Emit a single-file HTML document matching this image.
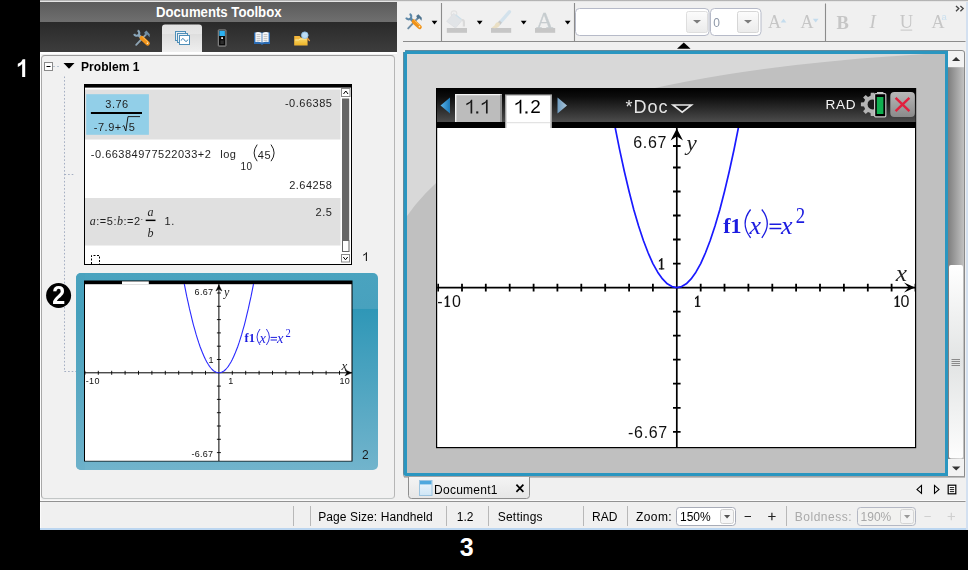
<!DOCTYPE html>
<html>
<head>
<meta charset="utf-8">
<title>TI-Nspire Documents Toolbox</title>
<style>
*{box-sizing:border-box;margin:0;padding:0}
html,body{width:968px;height:570px;overflow:hidden;background:#000}
body{position:relative;font-family:"Liberation Sans",sans-serif;font-size:12px;color:#000}
.abs{position:absolute}
#app{position:absolute;left:40px;top:0;width:928px;height:530px;background:#f0f0f0}
/* callout numbers */
.callout{position:absolute;color:#fff;font-weight:bold;font-size:25px;line-height:25px}
/* toolbox */
#tb-title{position:absolute;left:0;top:2px;width:357px;height:20px;background:linear-gradient(#5b5b5b,#6f6f6f);color:#fff;font-weight:bold;font-size:14px;line-height:21.5px;text-align:center;overflow:hidden}
#tb-icons{position:absolute;left:0;top:22px;width:357px;height:30px;background:linear-gradient(#2a2a2a,#3d3d3d)}
#tb-panel{position:absolute;left:1px;top:54.5px;width:354px;height:444.5px;border:1px solid #9a9a9a;border-color:#9c9c9c #b6b6b6 #c2c6c6 #a8a8a8;border-radius:4px;background:#f1f1f1}
/* document frame */
#docframe{position:absolute;left:363px;top:50px;width:545px;height:426px;border:3px solid #2a96c0;border-width:4px 3px 3px 4px;border-radius:3px 0 0 3px;background:#c0c0c0;overflow:hidden}
</style>
</head>
<body>
<div class="callout" style="left:459.8px;top:535px">3</div>

<div id="app">
  <div class="abs" style="left:0;top:0;width:928px;height:2px;background:linear-gradient(#9a9a9a,#ffffff)"></div>
  <!-- toolbox -->
  <div id="tb-title"><span style="display:inline-block;transform:scaleX(0.94);transform-origin:50% 50%">Documents Toolbox</span></div>
  <div id="tb-icons"></div>
  <div class="abs" style="left:0;top:52px;width:357px;height:2px;background:#fff"></div>
  <div id="tb-panel"></div>

  <!-- document frame -->
  <div id="docframe"></div>
  

  <!-- status bar -->
  <div class="abs" style="left:0;top:528px;width:928px;height:2px;background:#bcd6f0"></div><div class="abs" style="left:0;top:52px;width:1px;height:476px;background:#fcfcfc"></div>
  <div class="abs" style="left:926px;top:2px;width:2px;height:528px;background:#d3e0f0"></div>
</div>

<!-- MAIN GRAPH (page coordinates) -->
<svg class="abs" style="left:0;top:0;will-change:transform" width="968" height="570" viewBox="0 0 968 570" font-family="Liberation Sans, sans-serif">
  <defs>
    <linearGradient id="hdr" x1="0" y1="0" x2="0" y2="1"><stop offset="0" stop-color="#000"/><stop offset="0.25" stop-color="#0c0c0c"/><stop offset="1" stop-color="#4c4c4c"/></linearGradient>
    <linearGradient id="larr" x1="0" y1="0" x2="1" y2="0"><stop offset="0" stop-color="#5bb4ea"/><stop offset="1" stop-color="#1b78b8"/></linearGradient>
    <linearGradient id="rarr" x1="0" y1="0" x2="1" y2="0"><stop offset="0" stop-color="#6f9cc0"/><stop offset="1" stop-color="#a9c4d8"/></linearGradient>
    <linearGradient id="xbtn" x1="0" y1="0" x2="0" y2="1"><stop offset="0" stop-color="#b8b8b8"/><stop offset="1" stop-color="#8a8a8a"/></linearGradient>
    <clipPath id="gclip"><rect x="437.2" y="128" width="477.8" height="319"/></clipPath>
    <clipPath id="gearclip"><rect x="858" y="90" width="17" height="30"/></clipPath>
  </defs>
  <!-- swoosh -->
  <path d="M407,216 Q500,79 925,54 L407,54 Z" fill="#d8d8d8"/>
  <!-- handheld screen -->
  <rect x="436" y="88" width="480.2" height="360.2" fill="#000"/>
  <rect x="437" y="88" width="478.6" height="34" fill="url(#hdr)"/>
  <rect x="437.2" y="128" width="477.8" height="319" fill="#fff"/>
  <!-- tabs -->
  <polygon points="440.5,105.5 450,97.5 450,113.5" fill="url(#larr)"/>
  <rect x="455" y="94" width="47" height="28" fill="#bcbcbc"/>
  <path d="M455.7,122 V94.6 H500.4" fill="none" stroke="#f4f4f4" stroke-width="1.4"/>
  <path d="M501,95 V122" fill="none" stroke="#8a8a8a" stroke-width="1.6"/>
  <polygon points="472.23,99.87 471.10,99.87 469.83,101.78 466.33,103.57 466.33,105.24 468.79,104.10 470.57,102.59 470.57,113.40 472.23,113.40" fill="#1a1a1a"/>
  <rect x="476.2" y="111.4" width="2.1" height="2.1" fill="#1a1a1a"/>
  <polygon points="487.63,99.87 486.50,99.87 485.23,101.78 481.73,103.57 481.73,105.24 484.19,104.10 485.97,102.59 485.97,113.40 487.63,113.40" fill="#1a1a1a"/>
  <rect x="505" y="94.4" width="47" height="33.6" fill="#a4a4a4"/>
  <rect x="506.4" y="95.6" width="44" height="32.4" fill="#fff"/>
  <rect x="506.4" y="122.2" width="44" height="1" fill="#dcdcdc"/>
  <polygon points="521.33,99.87 520.20,99.87 518.93,101.78 515.43,103.57 515.43,105.24 517.89,104.10 519.67,102.59 519.67,113.40 521.33,113.40" fill="#000"/>
  <rect x="525.4" y="111.4" width="2.1" height="2.1" fill="#000"/>
  <text x="530.2" y="113.4" font-size="18.9" fill="#000">2</text>
  <polygon points="557.5,97.5 567,105.5 557.5,113.5" fill="url(#rarr)"/>
  <text x="625.5" y="112.5" font-size="18" fill="#e4e4e4" letter-spacing="1">*Doc</text>
  <polygon points="673,105 691.5,105 682.2,112.2" fill="#1a1a1a" stroke="#e8e8e8" stroke-width="1.6" stroke-linejoin="miter"/>
  <text x="825.4" y="109" font-size="13.6" fill="#f4f4f4" letter-spacing="0.8">RAD</text>
  <g clip-path="url(#gearclip)"><path d="M881.2,102.3 L884.3,102.6 L884.3,106.2 L881.2,106.5 L880.1,109.0 L882.1,111.3 L879.5,113.9 L877.2,111.9 L874.7,113.0 L874.4,116.1 L870.8,116.1 L870.5,113.0 L868.0,111.9 L865.7,113.9 L863.1,111.3 L865.1,109.0 L864.0,106.5 L860.9,106.2 L860.9,102.6 L864.0,102.3 L865.1,99.8 L863.1,97.5 L865.7,94.9 L868.0,96.9 L870.5,95.8 L870.8,92.7 L874.4,92.7 L874.7,95.8 L877.2,96.9 L879.5,94.9 L882.1,97.5 L880.1,99.8 Z" fill="#b4b4b4"/><circle cx="872.6" cy="104.4" r="5.0" fill="#1c1c1c"/></g>
  <rect x="877" y="92" width="6.4" height="2" fill="#c8c8c8"/>
  <rect x="874.6" y="93.6" width="11.2" height="23.2" rx="1" fill="#000" stroke="#c8c8c8" stroke-width="1.2"/>
  <rect x="876.8" y="97" width="6.6" height="17" fill="#10b050"/>
  <!-- close button -->
  <rect x="890.3" y="92" width="24.6" height="25" rx="4" fill="url(#xbtn)"/>
  <path d="M895.6,97.8 L909.4,111.2 M909.4,97.8 L895.6,111.2" stroke="#e2203e" stroke-width="2.4" fill="none"/>
  <!-- graph -->
  <g clip-path="url(#gclip)">
    <path d="M676.8,128 V447 M437,287.6 H915" stroke="#000" stroke-width="1.7" fill="none"/>
    <path d="M438.1,283.8 v7.6 M462.0,283.8 v7.6 M485.8,283.8 v7.6 M509.7,283.8 v7.6 M533.6,283.8 v7.6 M557.4,283.8 v7.6 M581.3,283.8 v7.6 M605.2,283.8 v7.6 M629.1,283.8 v7.6 M652.9,283.8 v7.6 M700.7,283.8 v7.6 M724.5,283.8 v7.6 M748.4,283.8 v7.6 M772.3,283.8 v7.6 M796.1,283.8 v7.6 M820.0,283.8 v7.6 M843.9,283.8 v7.6 M867.8,283.8 v7.6 M891.6,283.8 v7.6 M915.5,283.8 v7.6 M673.0,431.8 h7.6 M673.0,407.8 h7.6 M673.0,383.7 h7.6 M673.0,359.7 h7.6 M673.0,335.7 h7.6 M673.0,311.6 h7.6 M673.0,263.6 h7.6 M673.0,239.5 h7.6 M673.0,215.5 h7.6 M673.0,191.5 h7.6 M673.0,167.5 h7.6 M673.0,146.0 h7.6" stroke="#000" stroke-width="1.8" fill="none"/>
    <path d="M670.5999999999999,140.6 L676.8,128.4 L683.0,140.6 L676.8,136.2 Z" fill="#000"/>
    <path d="M904,282.6 L915,287.6 L904,292.6 L908.6,287.6 Z" fill="#000"/>
    <path d="M610.0,99.2 L614.7,125.2 L619.5,149.2 L624.3,171.3 L629.1,191.5 L633.8,209.7 L638.6,226.1 L643.4,240.5 L648.2,253.0 L652.9,263.6 L657.7,272.2 L662.5,278.9 L667.3,283.8 L672.0,286.6 L676.8,287.6 L681.6,286.6 L686.3,283.8 L691.1,278.9 L695.9,272.2 L700.7,263.6 L705.4,253.0 L710.2,240.5 L715.0,226.1 L719.8,209.7 L724.5,191.5 L729.3,171.3 L734.1,149.2 L738.9,125.2 L743.6,99.2" stroke="#1a1aff" stroke-width="1.7" fill="none" stroke-linejoin="round"/>
    <g font-size="16" fill="#111" letter-spacing="0.7">
      <text x="633.2" y="148">6.67</text>
      <text x="628" y="437.8">-6.67</text>
      <text x="437.2" y="307">-</text>
      <text x="452" y="307">0</text>
      <text x="900.5" y="307">0</text>
    </g>
    <path d="M660.75,269.40 V260.50 L658.90,262.00 L658.90,260.60 L661.70,258.10 H662.45 V269.40 Z" fill="#111"/><rect x="658.90" y="268.30" width="5.4" height="1.1" fill="#111"/>
    <path d="M696.85,306.90 V298.00 L695.00,299.50 L695.00,298.10 L697.80,295.60 H698.55 V306.90 Z" fill="#111"/><rect x="695.00" y="305.80" width="5.4" height="1.1" fill="#111"/>
    <path d="M446.55,306.90 V298.00 L444.70,299.50 L444.70,298.10 L447.50,295.60 H448.25 V306.90 Z" fill="#111"/><rect x="444.70" y="305.80" width="5.4" height="1.1" fill="#111"/>
    <path d="M896.45,306.90 V298.00 L894.60,299.50 L894.60,298.10 L897.40,295.60 H898.15 V306.90 Z" fill="#111"/><rect x="894.60" y="305.80" width="5.4" height="1.1" fill="#111"/>
    <text x="0" y="0" font-size="21" font-family="Liberation Serif, serif" font-style="italic" fill="#222" transform="translate(686.4 149.6) scale(1.1 1)">y</text>
    <text x="0" y="0" font-size="23" font-family="Liberation Serif, serif" font-style="italic" fill="#222" transform="translate(895.8 281.4) scale(1.1 1)">x</text>
    <g fill="#1c1ce0" font-family="Liberation Serif, serif">
      <text x="723.3" y="233.4" font-size="22" font-weight="bold">f1</text>
      <path d="M750.6,209.5 Q739.6,223.5 750.6,237.8" fill="none" stroke="#1c1ce0" stroke-width="1.3"/>
      <text x="749.6" y="233.6" font-size="26" font-style="italic">x</text>
      <path d="M761.8,209.5 Q772.8,223.5 761.8,237.8" fill="none" stroke="#1c1ce0" stroke-width="1.3"/>
      <path d="M769.5,224.2 h11.8 M769.5,228.6 h11.8" fill="none" stroke="#1c1ce0" stroke-width="1.5"/>
      <text x="781" y="233.6" font-size="26" font-style="italic">x</text>
      <text x="0" y="0" font-size="22.5" transform="translate(795.8 223.3) scale(0.84 1)">2</text>
    </g>
  </g>
  <!-- callout 1 and 3 -->
  <polygon points="25.20,59.29 22.69,59.29 21.06,62.02 17.79,63.86 17.79,66.94 20.13,65.78 22.15,63.99 22.15,76.90 25.20,76.90" fill="#fff"/>
</svg>

<!-- LEFT PANEL (page coordinates) -->
<svg class="abs" style="left:0;top:0" width="968" height="570" viewBox="0 0 968 570" font-family="Liberation Sans, sans-serif">
  <defs>
    <linearGradient id="selg" x1="0" y1="0" x2="0" y2="1"><stop offset="0" stop-color="#4aa3bf"/><stop offset="0.18" stop-color="#48a1be"/><stop offset="0.185" stop-color="#2f97b7"/><stop offset="1" stop-color="#72b4cc"/></linearGradient>
    <linearGradient id="selg2" x1="0" y1="0" x2="0" y2="1"><stop offset="0" stop-color="#49a2be"/><stop offset="0.2" stop-color="#46a0bc"/><stop offset="1" stop-color="#6db1ca"/></linearGradient>
    <clipPath id="tclip"><rect x="85" y="284" width="267" height="177"/></clipPath>
    <clipPath id="selclip"><rect x="76" y="273" width="302" height="197" rx="5"/></clipPath>
  </defs>
  <!-- tree -->
  <path d="M64.5,76.5 V372 M64.5,174.5 H75 M64.5,371.5 H76" stroke="#a4aec2" stroke-width="1" stroke-dasharray="1.6 2" fill="none"/>
  <path d="M53,66.5 H61" stroke="#b8c4d0" stroke-width="1" stroke-dasharray="2 2"/>
  <rect x="44.5" y="62.5" width="8" height="8" fill="#fff" stroke="#8a8a8a" stroke-width="1"/>
  <path d="M46.5,66.5 H50.5" stroke="#000" stroke-width="1"/>
  <polygon points="63.5,63 74.5,63 69,68.8" fill="#000"/>
  <text x="81" y="70.8" font-size="12" font-weight="bold" fill="#000" letter-spacing="0.05">Problem 1</text>

  <!-- thumbnail 1 : calculator -->
  <rect x="84.5" y="85" width="267" height="179.5" fill="#fff" stroke="#000" stroke-width="1"/>
  <rect x="84" y="84" width="268" height="3.6" fill="#000"/>
  <rect x="85" y="89.5" width="255.5" height="50" fill="#e0e0e0"/>
  <rect x="85" y="198" width="255.5" height="47.5" fill="#e0e0e0"/>
  <rect x="86.2" y="94.2" width="62.7" height="40.6" fill="#92cfe8"/>
  <g fill="#1e1e1e" font-size="11" letter-spacing="0.5">
    <text x="105.3" y="108">3.76</text>
    <rect x="90.9" y="112" width="51.1" height="2" fill="#000"/>
    <text x="93.8" y="131">-7.9+</text>
    <path d="M122.6,126.4 l1.2,-0.8 l2,5.4 l2.2,-14.4 h12" fill="none" stroke="#1e1e1e" stroke-width="1"/>
    <text x="128.8" y="131">5</text>
    <text x="332.4" y="107.4" text-anchor="end">-0.66385</text>
    <text x="90.8" y="157.7">-0.66384977522033+2</text>
    <text x="220.3" y="157.7">log</text>
    <text x="240.5" y="170.4" font-size="10">10</text>
    <text x="257.8" y="158.5">45</text>
    <path d="M257.2,144.6 Q251,153 257.2,161.2 M271,144.6 Q277.2,153 271,161.2" fill="none" stroke="#1e1e1e" stroke-width="1"/>
    <text x="332.4" y="189.2" text-anchor="end">2.64258</text>
    <text x="332.4" y="216" text-anchor="end">2.5</text>
    <text x="89.8" y="224.8"><tspan font-style="italic" font-family="Liberation Serif, serif" font-size="12">a</tspan>:=5:<tspan font-style="italic" font-family="Liberation Serif, serif" font-size="12">b</tspan>:=2<tspan font-size="8" dy="-3">·</tspan></text>
    <text x="147.4" y="216.2" font-style="italic" font-family="Liberation Serif, serif" font-size="12">a</text>
    <rect x="145.7" y="219.6" width="9.8" height="1.5" fill="#000"/>
    <text x="147.6" y="236.6" font-style="italic" font-family="Liberation Serif, serif" font-size="12">b</text>
    <text x="164.6" y="224.8">1.</text>
  </g>
  <path d="M91.5,264 V255.5 H99.5 V264" fill="none" stroke="#000" stroke-width="1" stroke-dasharray="2 1.5"/>
  <!-- thumb scrollbar -->
  <rect x="341.5" y="88.5" width="8.5" height="8" fill="#fff" stroke="#8a8a8a" stroke-width="1"/>
  <path d="M343.5,94 L345.8,91 L348,94" fill="none" stroke="#000" stroke-width="1"/>
  <rect x="342" y="98.5" width="7.2" height="141.5" fill="#666"/>
  <rect x="342.5" y="240.5" width="6.5" height="11" fill="#fff" stroke="#666" stroke-width="1"/>
  <rect x="341.5" y="254.5" width="8" height="7.5" fill="#fff" stroke="#8a8a8a" stroke-width="1"/>
  <path d="M343.3,257 L345.5,259.8 L347.7,257" fill="none" stroke="#000" stroke-width="1"/>
  <polygon points="366.94,252.26 366.21,252.26 365.39,253.50 363.13,254.66 363.13,255.73 364.72,255.00 365.86,254.02 365.86,261.00 366.94,261.00" fill="#111"/>

  <!-- thumbnail 2 : selected graph -->
  <g clip-path="url(#selclip)">
    <rect x="76" y="273" width="302" height="197" fill="url(#selg)"/>
    <rect x="76" y="273" width="9" height="197" fill="url(#selg2)"/>
    <polygon points="76,273 378,273 378,309 352,309 352,280 84,280 84,309 76,320" fill="#49a2be" opacity="0"/>
  </g>
  <rect x="84" y="280.5" width="268.5" height="181" fill="#000"/>
  <rect x="85" y="284.2" width="266.5" height="176.6" fill="#fff"/>
  <rect x="122" y="281.4" width="26.8" height="3" fill="#fff"/>
  <g clip-path="url(#tclip)">
    <path d="M218.9,284 V461 M85,372.8 H352" stroke="#000" stroke-width="1" fill="none"/>
    <path d="M84.9,370.8 v4 M98.3,370.8 v4 M111.7,370.8 v4 M125.1,370.8 v4 M138.5,370.8 v4 M151.9,370.8 v4 M165.3,370.8 v4 M178.7,370.8 v4 M192.1,370.8 v4 M205.5,370.8 v4 M232.3,370.8 v4 M245.7,370.8 v4 M259.1,370.8 v4 M272.5,370.8 v4 M285.9,370.8 v4 M299.3,370.8 v4 M312.7,370.8 v4 M326.1,370.8 v4 M339.5,370.8 v4 M352.9,370.8 v4 M216.9,452.6 h4 M216.9,439.3 h4 M216.9,426.0 h4 M216.9,412.7 h4 M216.9,399.4 h4 M216.9,386.1 h4 M216.9,359.5 h4 M216.9,346.2 h4 M216.9,332.9 h4 M216.9,319.6 h4 M216.9,306.3 h4 M216.9,293.0 h4" stroke="#000" stroke-width="0.9" fill="none"/>
    <path d="M215.9,291 L218.9,285 L221.9,291 L218.9,289 Z" fill="#000" stroke="#000" stroke-width="0.5"/>
    <path d="M345,369.8 L351.5,372.8 L345,375.8 L347,372.8 Z" fill="#000" stroke="#000" stroke-width="0.5"/>
    <path d="M182.7,275.8 L184.1,282.9 L185.4,289.7 L186.7,296.2 L188.1,302.4 L189.4,308.4 L190.8,314.1 L192.1,319.6 L193.4,324.8 L194.8,329.7 L196.1,334.4 L197.5,338.8 L198.8,342.9 L200.1,346.7 L201.5,350.3 L202.8,353.6 L204.2,356.7 L205.5,359.5 L206.8,362.0 L208.2,364.3 L209.5,366.3 L210.9,368.0 L212.2,369.5 L213.5,370.7 L214.9,371.6 L216.2,372.3 L217.6,372.7 L218.9,372.8 L220.2,372.7 L221.6,372.3 L222.9,371.6 L224.3,370.7 L225.6,369.5 L226.9,368.0 L228.3,366.3 L229.6,364.3 L231.0,362.0 L232.3,359.5 L233.6,356.7 L235.0,353.6 L236.3,350.3 L237.7,346.7 L239.0,342.9 L240.3,338.8 L241.7,334.4 L243.0,329.7 L244.4,324.8 L245.7,319.6 L247.0,314.1 L248.4,308.4 L249.7,302.4 L251.1,296.2 L252.4,289.7 L253.7,282.9 L255.1,275.8" stroke="#2a2aff" stroke-width="1.1" fill="none"/>
    <g font-size="9" fill="#111" letter-spacing="0.3">
      <text x="194.6" y="295.2">6.67</text>
      <text x="191.4" y="456.6">-6.67</text>
      <text x="208.4" y="363.2">1</text>
      <text x="228.2" y="384">1</text>
      <text x="85.8" y="384">-10</text>
      <text x="339.4" y="384">10</text>
    </g>
    <text x="224" y="296" font-size="12" font-family="Liberation Serif, serif" font-style="italic" fill="#222">y</text>
    <text x="341.5" y="369.5" font-size="13" font-family="Liberation Serif, serif" font-style="italic" fill="#222">x</text>
    <g fill="#1c1ce0" font-family="Liberation Serif, serif">
      <text x="244.6" y="342.4" font-size="12.5" font-weight="bold">f1</text>
      <path d="M260,329 Q254,337 260,345" fill="none" stroke="#1c1ce0" stroke-width="0.9"/>
      <text x="259.6" y="342.6" font-size="14.5" font-style="italic">x</text>
      <path d="M266.4,329 Q272.4,337 266.4,345" fill="none" stroke="#1c1ce0" stroke-width="0.9"/>
      <path d="M270.6,337.4 h6.4 M270.6,340 h6.4" fill="none" stroke="#1c1ce0" stroke-width="1"/>
      <text x="277" y="342.6" font-size="14.5" font-style="italic">x</text>
      <text x="0" y="0" font-size="12.5" transform="translate(285.4 336.8) scale(0.85 1)">2</text>
    </g>
  </g>
  <text x="362" y="458.6" font-size="12" fill="#1a1a1a">2</text>
  <!-- callout 2 -->
  <circle cx="58.6" cy="295.5" r="12.5" fill="#000"/>
  <text x="0" y="0" font-size="25" font-weight="bold" fill="#fff" text-anchor="middle" transform="translate(58.7 304.1) scale(0.93 1)">2</text>
</svg>

<!-- TOOLBAR + ICONS (page coordinates) -->
<svg class="abs" style="left:0;top:0" width="968" height="570" viewBox="0 0 968 570" font-family="Liberation Sans, sans-serif">
  <defs>
    <g id="toolsico">
      <path d="M2.2,14.4 L11.6,4.4" fill="none" stroke="#8da3b3" stroke-width="1.9" stroke-linecap="round"/>
      <path d="M3.6,0.1 A2.7,2.7 0 1 1 0.1,3.6" fill="none" stroke="#89a6ba" stroke-width="2.1" stroke-linecap="butt"/>
      <path d="M4.4,4.4 L8,8" fill="none" stroke="#89a6ba" stroke-width="2.8"/>
      <path d="M10.2,2 L12.4,0.2 L15.8,3.8 L15.6,6.8 L13.2,4.2 L11.8,5.4 Z" fill="#6f8da3"/>
      <path d="M7.8,7.6 L13.6,13" fill="none" stroke="#f0931a" stroke-width="4.4" stroke-linecap="round"/>
      <path d="M8.6,6.6 L14.4,12" fill="none" stroke="#ffc05a" stroke-width="0.9" stroke-linecap="round"/>
      <circle cx="13.4" cy="12.8" r="0.8" fill="#fff3d8"/>
    </g>
    <g id="toolsicoD">
      <path d="M2.2,14.4 L11.6,4.4" fill="none" stroke="#6f8ea6" stroke-width="1.9" stroke-linecap="round"/>
      <path d="M3.6,0.1 A2.7,2.7 0 1 1 0.1,3.6" fill="none" stroke="#5d88a8" stroke-width="2.1" stroke-linecap="butt"/>
      <path d="M4.4,4.4 L8,8" fill="none" stroke="#5d88a8" stroke-width="2.8"/>
      <path d="M10.2,2 L12.4,0.2 L15.8,3.8 L15.6,6.8 L13.2,4.2 L11.8,5.4 Z" fill="#4f748f"/>
      <path d="M7.8,7.6 L13.6,13" fill="none" stroke="#f0931a" stroke-width="4.4" stroke-linecap="round"/>
      <path d="M8.6,6.6 L14.4,12" fill="none" stroke="#ffc05a" stroke-width="0.9" stroke-linecap="round"/>
      <circle cx="13.4" cy="12.8" r="0.8" fill="#fff3d8"/>
    </g>
    <linearGradient id="combobtn" x1="0" y1="0" x2="0" y2="1"><stop offset="0" stop-color="#fcfcfc"/><stop offset="1" stop-color="#ebebeb"/></linearGradient>
    <linearGradient id="folderg" x1="0" y1="0" x2="0" y2="1"><stop offset="0" stop-color="#f9d868"/><stop offset="1" stop-color="#eeb52a"/></linearGradient>
    <linearGradient id="tabg" x1="0" y1="0" x2="0" y2="1"><stop offset="0" stop-color="#e2e2e2"/><stop offset="0.35" stop-color="#e6e6e6"/><stop offset="0.36" stop-color="#dedede"/><stop offset="1" stop-color="#efefef"/></linearGradient>
  </defs>

  <!-- toolbox icon row -->
  <path d="M162,52 V27.5 Q162,24.5 165,24.5 H199 Q202,24.5 202,27.5 V52 Z" fill="url(#tabg)"/>
  <use href="#toolsico" x="134" y="30.4"/>
  <!-- page sorter icon -->
  <g fill="#e8eef3" stroke="#4f8fb8" stroke-width="1">
    <rect x="175.5" y="31.5" width="10" height="9"/>
    <rect x="177.5" y="33.5" width="10" height="9"/>
    <rect x="179.5" y="35.5" width="10" height="9" fill="#fff"/>
    <path d="M181.2,40.6 Q182.6,36.8 184.4,40 T187.8,39.6" fill="none" stroke="#3f86b4" stroke-width="1"/>
  </g>
  <!-- handheld icon -->
  <rect x="218.3" y="30" width="7.6" height="16" rx="0.4" fill="#0a0a0a" stroke="#a8a8a8" stroke-width="0.9"/>
  <rect x="219.3" y="30.8" width="5.6" height="5.2" fill="#2db2f2"/>
  <rect x="221.2" y="37.2" width="1.8" height="1.8" fill="#e6e6e6"/>
  <rect x="220.4" y="40.4" width="3.4" height="3.6" fill="#2c2c2c"/>
  <!-- book icon -->
  <path d="M254,32.4 H270 V44 H263.4 L262,45 L260.6,44 H254 Z" fill="#2b6cb4"/>
  <path d="M255.4,32.4 Q259,31.6 261.6,33 V42.4 Q259,41.4 255.4,42 Z M268.6,32.4 Q265,31.6 262.4,33 V42.4 Q265,41.4 268.6,42 Z" fill="#f8f8f8"/>
  <path d="M256.6,34.6 H260.4 M256.6,36.6 H260.4 M256.6,38.6 H260.4 M256.6,40.4 H260.4 M263.6,34.6 H267.4 M263.6,36.6 H267.4 M263.6,38.6 H267.4 M263.6,40.4 H267.4" stroke="#b4b4b4" stroke-width="0.8"/>
  <!-- folder icon -->
  <path d="M294.2,36 H299.6 L300.8,37.4 H307.6 V45.6 H294.2 Z" fill="#f2b53a"/>
  <path d="M294.8,39.4 H298.6 L299.8,38.4 H307 V45 H294.8 Z" fill="url(#folderg)"/><path d="M295.4,40 H298.8 L300,39 H306.4" fill="none" stroke="#fdeeb0" stroke-width="0.8"/>
  <path d="M307,37.8 L309.4,40.6" stroke="#e8963a" stroke-width="1.4" stroke-linecap="round"/>
  <circle cx="304.8" cy="35.2" r="3.3" fill="#bcdcf4" stroke="#8fc0e6" stroke-width="0.9"/>

  <!-- main toolbar -->
  <path d="M403,41.5 H965.5" stroke="#8c8c8c" stroke-width="1.1"/>
  <path d="M441.5,3 V41 M574.5,3 V41 M825.5,3.5 V41" stroke="#8c8c8c" stroke-width="1.1"/>
  <use href="#toolsicoD" x="406" y="14"/>
  <g fill="#000">
    <polygon points="431.6,20.8 437.4,20.8 434.5,24.4"/>
    <polygon points="476.8,20.8 482.6,20.8 479.7,24.4"/>
    <polygon points="520.8,20.8 526.6,20.8 523.7,24.4"/>
    <polygon points="564.8,20.8 570.6,20.8 567.7,24.4"/>
    <polygon points="677,48.8 690.6,48.8 683.8,42.6"/>
  </g>
  <!-- fill bucket (disabled) -->
  <rect x="446.8" y="28" width="20.2" height="4.8" fill="#c6c6c6"/>
  <circle cx="454" cy="13.6" r="2.8" fill="none" stroke="#e2e2e2" stroke-width="1.2"/>
  <path d="M453.6,13.4 L462.4,20 L455.6,28 L446.6,21.4 Z" fill="#e1e4e7" stroke="#d8dadd" stroke-width="0.6"/>
  <path d="M455.6,14.8 L461.6,19.4" stroke="#cfe0ea" stroke-width="1.2"/>
  <path d="M461.4,19 Q465.4,18.4 465,23 V26.6 H462.8 V22 Z" fill="#dadada"/>
  <!-- brush (disabled) -->
  <rect x="491" y="28" width="20.2" height="4.8" fill="#c6c6c6"/>
  <path d="M509.4,11.8 L499.4,23.4" stroke="#d3e2ec" stroke-width="3.4" stroke-linecap="round"/>
  <path d="M500.6,21.6 L498.4,24.4" stroke="#c8c8c8" stroke-width="3.2"/>
  <path d="M499.4,22.8 Q500.8,25 498.2,27.2 Q495,29 491.4,27.6 Q494.6,26.4 495.6,23.4 Q497.4,21.6 499.4,22.8 Z" fill="#eadfc4"/>
  <!-- text color A (disabled) -->
  <rect x="535" y="28" width="20.2" height="4.8" fill="#c6c6c6"/>
  <text x="544.8" y="27.9" font-size="23.5" font-family="Liberation Serif, serif" fill="#c6cccf" stroke="#c6cccf" stroke-width="0.3" text-anchor="middle">A</text>
  <!-- font combo -->
  <rect x="575.5" y="8.5" width="133.5" height="27" rx="4" fill="#fff" stroke="#b6bac8" stroke-width="1"/>
  <rect x="686.5" y="11.5" width="21" height="21" rx="2" fill="url(#combobtn)" stroke="#dedede" stroke-width="1"/>
  <polygon points="693,20 701,20 697,23.6" fill="#7c7c7c"/>
  <!-- size combo -->
  <rect x="710.5" y="8.5" width="50.5" height="27" rx="4" fill="#fff" stroke="#b6bac8" stroke-width="1"/>
  <rect x="737.5" y="11.5" width="21" height="21" rx="2" fill="url(#combobtn)" stroke="#d6d6d6" stroke-width="1"/>
  <polygon points="744,20 752,20 748,23.6" fill="#7c7c7c"/>
  <text x="713.2" y="26.7" font-size="12" fill="#8e98a8">0</text>
  <!-- A up / A down -->
  <g font-family="Liberation Serif, serif" fill="#c6c6c6">
    <text x="768" y="28" font-size="18">A</text>
    <text x="800.4" y="28" font-size="18">A</text>
    <text x="836.6" y="28.6" font-size="18.5" font-weight="bold">B</text>
    <text x="869.4" y="28.4" font-size="19" font-style="italic">I</text>
    <text x="899.8" y="28.2" font-size="18.5">U</text>
    <rect x="900.6" y="29.6" width="11.6" height="1" />
    <text x="931.6" y="28" font-size="18">A</text>
    <text x="941.4" y="20.2" font-size="9.5" fill="#cbe0ef" font-family="Liberation Sans, sans-serif">a</text>
  </g>
  <polygon points="780.6,22.4 786.4,22.4 783.5,18.8" fill="#c4dced"/>
  <polygon points="812.8,18.8 818.6,18.8 815.7,22.4" fill="#c4dced"/>
  <path d="M956,6 L958.8,8.6 L956,11.2 M960.4,6 L963.2,8.6 L960.4,11.2" fill="none" stroke="#444" stroke-width="1.3"/>
</svg>

<!-- SCROLLBAR + DOC TAB + STATUS (page coordinates) -->
<svg class="abs" style="left:0;top:0" width="968" height="570" viewBox="0 0 968 570" font-family="Liberation Sans, sans-serif">
  <defs>
    <linearGradient id="trk" x1="0" y1="0" x2="1" y2="0"><stop offset="0" stop-color="#7e7e7e"/><stop offset="1" stop-color="#c4c4c4"/></linearGradient>
    <linearGradient id="thm" x1="0" y1="0" x2="0" y2="1"><stop offset="0" stop-color="#ffffff"/><stop offset="0.5" stop-color="#e2e4e4"/><stop offset="1" stop-color="#fdfdfd"/></linearGradient>
    <linearGradient id="docico" x1="0" y1="0" x2="0" y2="1"><stop offset="0" stop-color="#eef6fc"/><stop offset="1" stop-color="#cfe6f6"/></linearGradient><linearGradient id="dtab" x1="0" y1="0" x2="0" y2="1"><stop offset="0" stop-color="#f4f4f4"/><stop offset="1" stop-color="#e6e6e6"/></linearGradient>
  </defs>
  <!-- vertical scrollbar -->
  <rect x="948" y="51" width="16.5" height="425.5" fill="url(#trk)"/>
  <rect x="948" y="51" width="16" height="16.2" fill="#f2f2f2"/>
  <rect x="948" y="459" width="16" height="17" fill="#f2f2f2"/>
  <rect x="949" y="265" width="14" height="193.5" rx="2" fill="url(#thm)"/>
  <path d="M951.5,359.5 h8.5 M951.5,361.5 h8.5 M951.5,363.5 h8.5 M951.5,365.5 h8.5" stroke="#8a8a8a" stroke-width="1"/>
  <polygon points="952,61 960.2,61 956.1,57" fill="#333"/>
  <polygon points="952,466.4 960.4,466.4 956.2,470.4" fill="#333"/>
  <path d="M948,50.5 H962 Q964.5,50.5 964.5,53 V476.5" fill="none" stroke="#8a8a8a" stroke-width="1"/>
  <path d="M404,476.8 H965" stroke="#8a8a8a" stroke-width="1.2"/>
  <path d="M403.5,476.5 V53 Q403.5,50.5 406,50.5 H948" fill="none" stroke="#8a8282" stroke-width="1" opacity="0.55"/><rect x="402" y="49" width="3" height="3" fill="#f0f0f0"/>

  <!-- document tab -->
  <path d="M408.5,477 V495.5 Q408.5,498.5 411.5,498.5 H526.5 Q529.5,498.5 529.5,495.5 V477" fill="url(#dtab)" stroke="#8e8e8e" stroke-width="1"/>
  
  <rect x="419.5" y="480.5" width="12.5" height="15" fill="url(#docico)" stroke="#9cc4e0" stroke-width="1"/>
  <rect x="420" y="481" width="11.5" height="3.4" fill="#4ea8de"/>
  <text x="434" y="493.6" font-size="12" fill="#000" letter-spacing="0.27">Document1</text>
  <path d="M516.4,484.6 L523.4,491.8 M523.4,484.6 L516.4,491.8" stroke="#000" stroke-width="1.7"/>
  <!-- nav -->
  <path d="M921.5,485.4 V493.4 L917,489.4 Z" fill="none" stroke="#000" stroke-width="1.1"/>
  <path d="M934.5,485.4 V493.4 L939,489.4 Z" fill="none" stroke="#000" stroke-width="1.1"/>
  <rect x="948.2" y="485.2" width="7.6" height="8.6" fill="#fff" stroke="#000" stroke-width="1.2"/>
  <path d="M949.8,487.6 h4.4 M949.8,489.6 h4.4 M949.8,491.6 h4.4" stroke="#000" stroke-width="0.9"/>

  <!-- status bar -->
  <path d="M40,500.5 H965.5" stroke="#fafafa" stroke-width="1"/><path d="M40,501.5 H965.5" stroke="#929292" stroke-width="1"/>
  <path d="M293.5,506 V526 M310.5,506 V526 M446.5,506 V526 M488.5,506 V526 M583.5,506 V526 M627.5,506 V526 M786.5,506 V526" stroke="#b8b8b8" stroke-width="1"/>
  <g font-size="12" fill="#000">
    <text x="318.2" y="521" letter-spacing="0.1">Page Size: Handheld</text>
    <text x="456.8" y="521">1.2</text>
    <text x="497.8" y="521" letter-spacing="0.2">Settings</text>
    <text x="592" y="521">RAD</text>
    <text x="636" y="521" letter-spacing="0.4">Zoom:</text>
    <text x="680" y="521">150%</text>
    <text x="794.8" y="521" fill="#aaaaaa" letter-spacing="0.5">Boldness:</text>
    <text x="860.6" y="521" fill="#aeaeae">190%</text>
  </g>
  <rect x="676.5" y="507.5" width="59" height="18" rx="3" fill="#fff" stroke="#a8acb8" stroke-width="1"/>
  <text x="680" y="521" font-size="12" fill="#000">150%</text>
  <rect x="720.5" y="509.5" width="13" height="14" rx="2" fill="#f6f6f6" stroke="#cfcfcf" stroke-width="1"/>
  <polygon points="724,515 730.2,515 727.1,518.4" fill="#555"/>
  <rect x="857.5" y="507.5" width="58" height="18" rx="3" fill="#f2f2f0" stroke="#b4b8c4" stroke-width="1"/>
  <text x="860.6" y="521" font-size="12" fill="#a8a8a8">190%</text>
  <rect x="900.5" y="509.5" width="13" height="14" rx="2" fill="#f4f4f4" stroke="#d4d4d4" stroke-width="1"/>
  <polygon points="904,515 910.2,515 907.1,518.4" fill="#9a9a9a"/>
  <path d="M744.6,516.5 h6.4 M768.2,516.5 h7.4 M771.9,512.8 v7.4" stroke="#222" stroke-width="1.2"/>
  <path d="M924.4,516.5 h6.4 M947.6,516.5 h7.4 M951.3,512.8 v7.4" stroke="#cfcfcf" stroke-width="1.2"/>
</svg>
</body>
</html>
